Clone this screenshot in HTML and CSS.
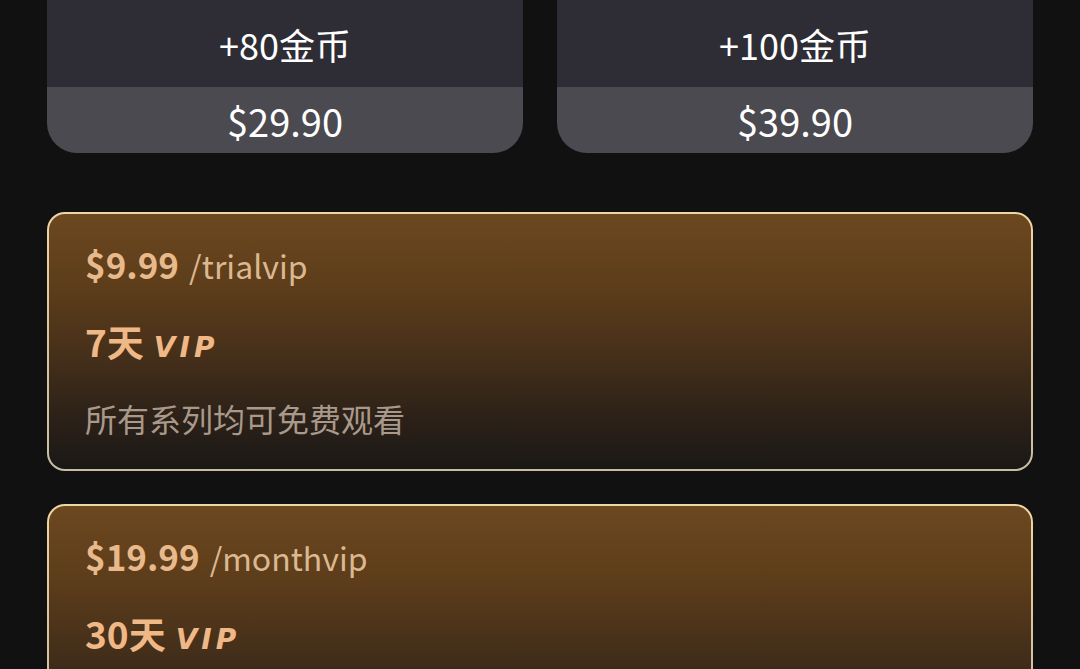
FILE: index.html
```html
<!DOCTYPE html>
<html lang="zh-CN">
<head>
<meta charset="utf-8">
<link rel="stylesheet" href="styles.css">
</head>
<body>
<div class="page">
  <div class="coins">
    <div class="coin">
      <div class="coin-amount">+80金币</div>
      <div class="coin-price">$29.90</div>
    </div>
    <div class="coin">
      <div class="coin-amount">+100金币</div>
      <div class="coin-price">$39.90</div>
    </div>
  </div>
  <div class="vip-list">
    <div class="vip-card">
      <div class="vip-price"><span class="amount">$9.99</span><span class="period">/trialvip</span></div>
      <div class="vip-days">7天<span class="vip-tag">VIP</span></div>
      <div class="vip-desc">所有系列均可免费观看</div>
    </div>
    <div class="vip-card">
      <div class="vip-price"><span class="amount">$19.99</span><span class="period">/monthvip</span></div>
      <div class="vip-days">30天<span class="vip-tag">VIP</span></div>
      <div class="vip-desc">所有系列均可免费观看</div>
    </div>
  </div>
</div>
</body>
</html>
```

FILE: styles.css
```css
html, body {
  margin: 0;
  padding: 0;
  background: #111111;
  height: 100%;
  overflow: hidden;
}
body {
  font-family: "Noto Sans CJK SC", "Noto Sans", sans-serif;
}
.page {
  padding: 0 47px;
}
.coins {
  display: grid;
  grid-template-columns: 1fr 1fr;
  column-gap: 34px;
}
.coin {
  border-radius: 0 0 30px 30px;
  overflow: hidden;
  display: flex;
  flex-direction: column;
}
.coin-amount {
  height: 87px;
  background: #2e2d35;
  color: #ffffff;
  font-size: 36px;
  line-height: 88px;
  text-align: center;
}
.coin-price {
  height: 66px;
  background: #4b4a50;
  color: #ffffff;
  font-size: 38px;
  line-height: 68px;
  text-align: center;
}
.vip-list {
  margin-top: 59px;
  display: flex;
  flex-direction: column;
  gap: 33px;
}
.vip-card {
  border: 2px solid transparent;
  border-radius: 18px;
  background:
    linear-gradient(180deg, #6c4820 0%, #5c3c1a 30%, #46301a 55%, #2e2218 78%, #1a1817 100%) padding-box,
    linear-gradient(180deg, #f0d6a4 0%, #d8c4a0 50%, #c9bea4 100%) border-box;
  padding: 28px 36px 29px;
  display: flex;
  flex-direction: column;
  gap: 33px;
}
.vip-price {
  line-height: 44px;
  height: 44px;
}
.amount {
  font-size: 35px;
  font-weight: 700;
  color: #e8b98b;
}
.period {
  margin-left: 10px;
  font-size: 32px;
  color: #dcb890;
}
.vip-days {
  line-height: 44px;
  height: 44px;
  font-size: 37px;
  font-weight: 700;
  color: #f0b887;
}
.vip-tag {
  margin-left: 10px;
  font-family: "DejaVu Sans", sans-serif;
  font-size: 28px;
  font-weight: 700;
  font-style: italic;
  letter-spacing: 4px;
  color: #f0b887;
}
.vip-desc {
  line-height: 44px;
  height: 44px;
  font-size: 32px;
  color: #a9998a;
}
```
